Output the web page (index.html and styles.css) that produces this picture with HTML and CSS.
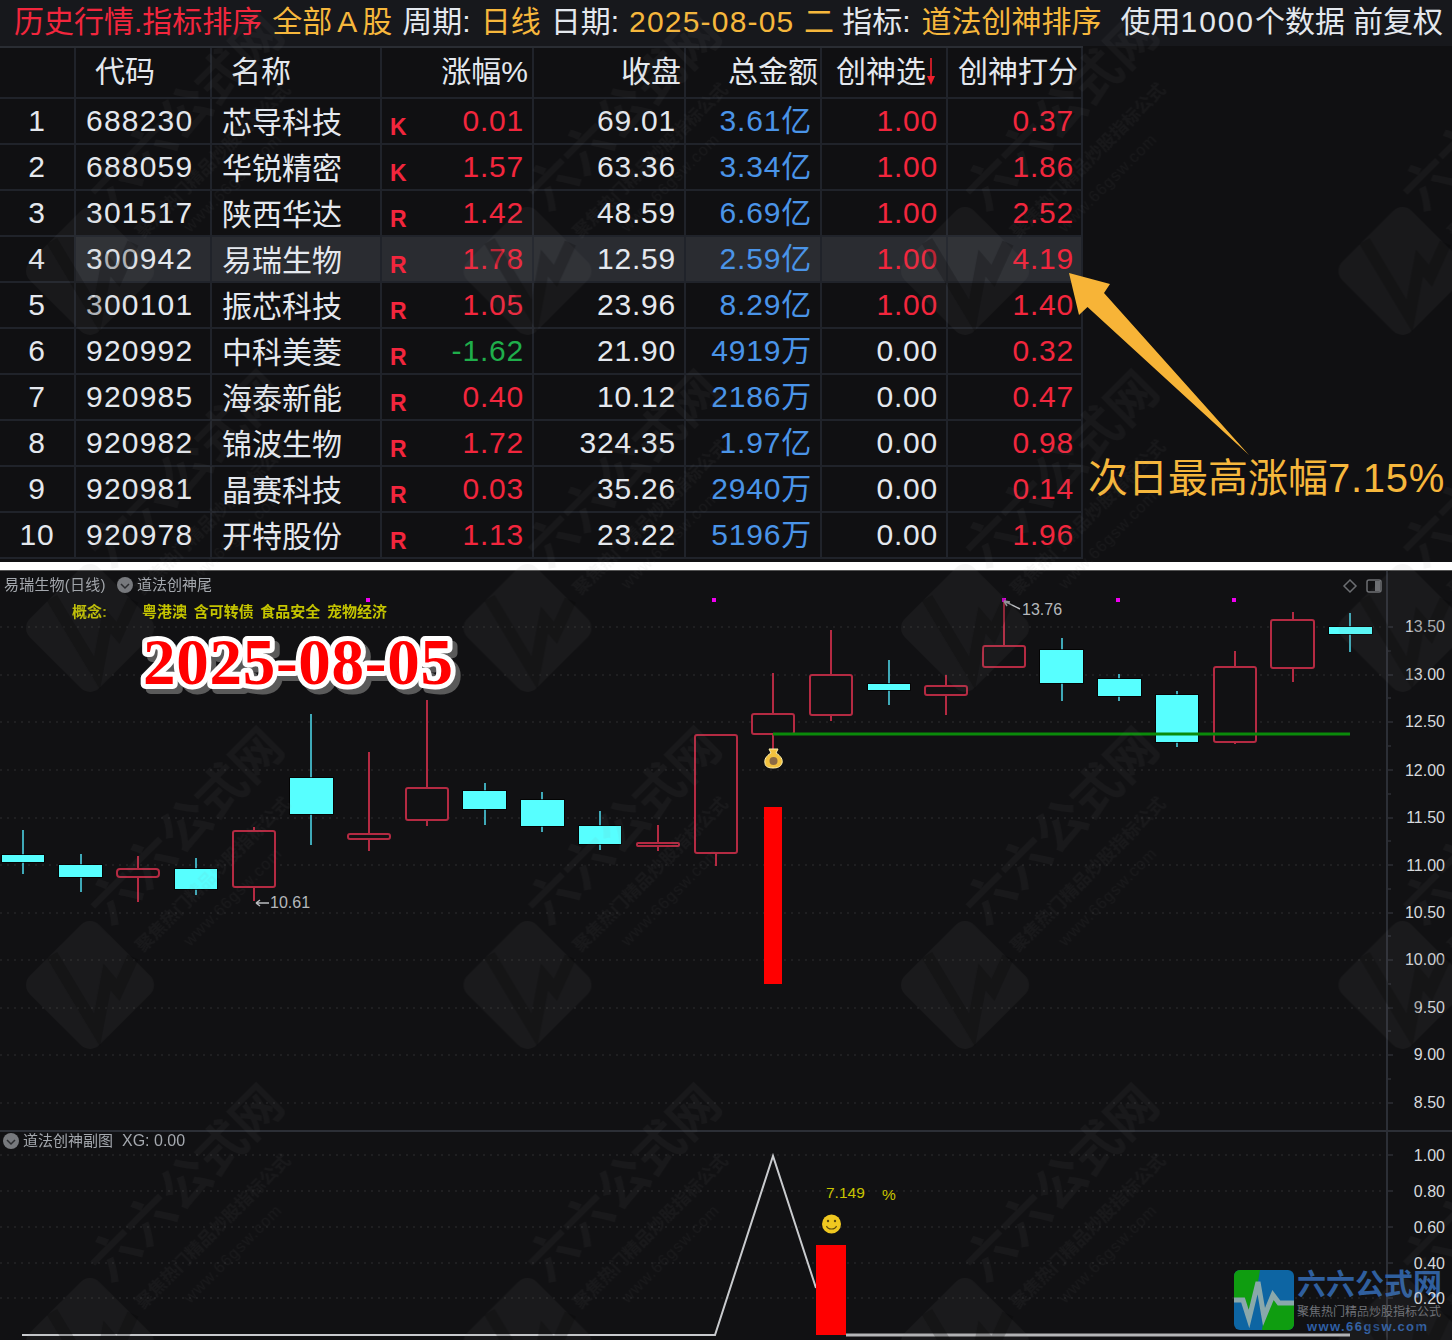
FILE: index.html
```html
<!DOCTYPE html>
<html lang="zh">
<head>
<meta charset="utf-8">
<title>历史行情.指标排序</title>
<link rel="stylesheet" href="styles.css">
</head>
<body>
<div class="page">
  <section class="top">
    <header class="title">
      <span class="red">历史行情.指标排序</span>
      <span class="gold">全部<span class="wide-a">A</span>股</span>
      <span class="white">周期:</span>
      <span class="gold">日线</span>
      <span class="white">日期:</span>
      <span class="gold num">2025-08-05 二</span>
      <span class="white n3">指标:</span>
      <span class="gold s1">道法创神排序</span>
      <span class="white s9">使用<span class="digits">1000</span>个数据</span>
      <span class="white n2">前复权</span>
    </header>
    <div class="body">
      <div class="table">
        <div class="row head">
          <div class="cell"></div>
          <div class="cell lh">代码</div>
          <div class="cell lh">名称</div>
          <div class="cell rh p6">涨幅%</div>
          <div class="cell rh p5">收盘</div>
          <div class="cell rh p4">总金额</div>
          <div class="cell lh sel">创神选<svg class="sort" width="10" height="30" viewBox="0 0 10 30"><path d="M5 1V20" stroke="#f0202c" stroke-width="1.6"/><path d="M1 19H9L5 28Z" fill="#f0202c"/></svg></div>
          <div class="cell lh score">创神打分</div>
        </div>
        <div class="row">
          <div class="cell rank">1</div><div class="cell code">688230</div><div class="cell name">芯导科技</div>
          <div class="cell pct"><span class="tag">K</span><span class="v red">0.01</span></div>
          <div class="cell v">69.01</div><div class="cell v blue">3.61亿</div><div class="cell v red pick">1.00</div><div class="cell v red last">0.37</div>
        </div>
        <div class="row">
          <div class="cell rank">2</div><div class="cell code">688059</div><div class="cell name">华锐精密</div>
          <div class="cell pct"><span class="tag">K</span><span class="v red">1.57</span></div>
          <div class="cell v">63.36</div><div class="cell v blue">3.34亿</div><div class="cell v red pick">1.00</div><div class="cell v red last">1.86</div>
        </div>
        <div class="row">
          <div class="cell rank">3</div><div class="cell code">301517</div><div class="cell name">陕西华达</div>
          <div class="cell pct"><span class="tag">R</span><span class="v red">1.42</span></div>
          <div class="cell v">48.59</div><div class="cell v blue">6.69亿</div><div class="cell v red pick">1.00</div><div class="cell v red last">2.52</div>
        </div>
        <div class="row active">
          <div class="cell rank">4</div><div class="cell code">300942</div><div class="cell name">易瑞生物</div>
          <div class="cell pct"><span class="tag">R</span><span class="v red">1.78</span></div>
          <div class="cell v">12.59</div><div class="cell v blue">2.59亿</div><div class="cell v red pick">1.00</div><div class="cell v red last">4.19</div>
        </div>
        <div class="row">
          <div class="cell rank">5</div><div class="cell code">300101</div><div class="cell name">振芯科技</div>
          <div class="cell pct"><span class="tag">R</span><span class="v red">1.05</span></div>
          <div class="cell v">23.96</div><div class="cell v blue">8.29亿</div><div class="cell v red pick">1.00</div><div class="cell v red last">1.40</div>
        </div>
        <div class="row">
          <div class="cell rank">6</div><div class="cell code">920992</div><div class="cell name">中科美菱</div>
          <div class="cell pct"><span class="tag">R</span><span class="v green">-1.62</span></div>
          <div class="cell v">21.90</div><div class="cell v blue">4919万</div><div class="cell v pick">0.00</div><div class="cell v red last">0.32</div>
        </div>
        <div class="row">
          <div class="cell rank">7</div><div class="cell code">920985</div><div class="cell name">海泰新能</div>
          <div class="cell pct"><span class="tag">R</span><span class="v red">0.40</span></div>
          <div class="cell v">10.12</div><div class="cell v blue">2186万</div><div class="cell v pick">0.00</div><div class="cell v red last">0.47</div>
        </div>
        <div class="row">
          <div class="cell rank">8</div><div class="cell code">920982</div><div class="cell name">锦波生物</div>
          <div class="cell pct"><span class="tag">R</span><span class="v red">1.72</span></div>
          <div class="cell v">324.35</div><div class="cell v blue">1.97亿</div><div class="cell v pick">0.00</div><div class="cell v red last">0.98</div>
        </div>
        <div class="row">
          <div class="cell rank">9</div><div class="cell code">920981</div><div class="cell name">晶赛科技</div>
          <div class="cell pct"><span class="tag">R</span><span class="v red">0.03</span></div>
          <div class="cell v">35.26</div><div class="cell v blue">2940万</div><div class="cell v pick">0.00</div><div class="cell v red last">0.14</div>
        </div>
        <div class="row">
          <div class="cell rank">10</div><div class="cell code">920978</div><div class="cell name">开特股份</div>
          <div class="cell pct"><span class="tag">R</span><span class="v red">1.13</span></div>
          <div class="cell v">23.22</div><div class="cell v blue">5196万</div><div class="cell v pick">0.00</div><div class="cell v red last">1.96</div>
        </div>
      </div>
      <aside class="callout">次日最高涨幅<span class="callout-num">7.15%</span></aside>
    </div>
    <svg class="pointer" width="200" height="200" viewBox="1060 265 200 200">
      <path class="pointer-fill" d="M1069 273L1110 284L1104 293L1249 455L1087.5 307L1079 315Z"/>
    </svg>
  </section>
  <div class="band"></div>

  <svg class="chart" width="1452" height="769" viewBox="0 571 1452 769">
    <g class="grid">
      <path d="M0 627H1387M0 675H1387M0 722H1387M0 770H1387M0 818H1387M0 865H1387M0 913H1387M0 960H1387M0 1008H1387M0 1055H1387M0 1103H1387"/>
      <path d="M0 1155H1387M0 1191H1387M0 1227H1387M0 1263H1387M0 1298H1387"/>
    </g>
    <path class="axis" d="M1387 571V1340M0 1131H1452"/>
    <path class="ticks" d="M1388 627H1393M1388 651H1391M1388 675H1393M1388 698H1391M1388 722H1393M1388 746H1391M1388 770H1393M1388 794H1391M1388 818H1393M1388 841H1391M1388 865H1393M1388 889H1391M1388 913H1393M1388 936H1391M1388 960H1393M1388 984H1391M1388 1008H1393M1388 1031H1391M1388 1055H1393M1388 1079H1391M1388 1103H1393M1388 1155H1393M1388 1191H1393M1388 1227H1393M1388 1263H1393M1388 1298H1393"/>

    <defs>
      <clipPath id="logoClip"><rect x="1234" y="1270" width="60" height="60" rx="6"/></clipPath>
    </defs>
    <g clip-path="url(#logoClip)">
      <rect class="logo-blue" x="1234" y="1270" width="60" height="60"/>
      <path class="logo-green" d="M1234 1270H1260L1258 1282L1249 1319L1243 1300H1234Z"/>
      <path class="logo-green" d="M1294 1303H1279L1273 1295L1264 1317L1262 1330H1294Z"/>
      <path class="logo-pulse" d="M1234 1300H1243L1249 1319L1258 1282L1264 1317L1273 1295L1279 1303H1294"/>
    </g>
    <text class="brand" x="1297" y="1295" textLength="145">六六公式网</text>
    <text class="brand-sub" x="1297" y="1316">聚焦热门精品炒股指标公式</text>
    <text class="brand-url" x="1307" y="1331" textLength="120">www.66gsw.com</text>

    <g class="axis-labels">
      <text x="1445" y="632">13.50</text><text x="1445" y="680">13.00</text><text x="1445" y="727">12.50</text>
      <text x="1445" y="776">12.00</text><text x="1445" y="823">11.50</text><text x="1445" y="871">11.00</text>
      <text x="1445" y="918">10.50</text><text x="1445" y="965">10.00</text><text x="1445" y="1013">9.50</text>
      <text x="1445" y="1060">9.00</text><text x="1445" y="1108">8.50</text>
      <text x="1445" y="1161">1.00</text><text x="1445" y="1197">0.80</text><text x="1445" y="1233">0.60</text>
      <text x="1445" y="1269">0.40</text><text x="1445" y="1304">0.20</text>
    </g>

    <g class="wick-fall">
      <path d="M23 830V874M81 854V892M196 858V895M311 714V845M485 783V825M542 792V832M600 811V850M889 660V705M1062 638V701M1119 674V701M1177 691V747M1350 613V652"/>
    </g>
    <g class="wick-rise">
      <path d="M138 856V902M254 827V901M369 752V851M427 700V826M658 825V851M716 735V866M773 673V750M831 630V721M946 675V715M1004 600V646M1235 651V744M1293 612V682"/>
    </g>

    <g class="fall">
      <rect x="2" y="855" width="42" height="7"/>
      <rect x="59" y="865" width="43" height="12"/>
      <rect x="175" y="869" width="42" height="20"/>
      <rect x="290" y="778" width="43" height="36"/>
      <rect x="463" y="791" width="43" height="18"/>
      <rect x="521" y="800" width="43" height="26"/>
      <rect x="579" y="826" width="42" height="18"/>
      <rect x="868" y="684" width="42" height="6"/>
      <rect x="1040" y="650" width="43" height="33"/>
      <rect x="1098" y="679" width="43" height="17"/>
      <rect x="1156" y="695" width="42" height="47"/>
      <rect x="1329" y="627" width="43" height="7"/>
    </g>
    <g class="rise">
      <rect x="117" y="869" width="42" height="8" rx="3"/>
      <rect x="233" y="831" width="42" height="56" rx="2"/>
      <rect x="348" y="834" width="42" height="5" rx="2"/>
      <rect x="406" y="788" width="42" height="32" rx="2"/>
      <rect x="637" y="843" width="42" height="3" rx="1"/>
      <rect x="695" y="735" width="42" height="118" rx="2"/>
      <rect x="752" y="714" width="42" height="20" rx="2"/>
      <rect x="810" y="675" width="42" height="40" rx="2"/>
      <rect x="925" y="686" width="42" height="9" rx="2"/>
      <rect x="983" y="646" width="42" height="21" rx="2"/>
      <rect x="1214" y="667" width="42" height="75" rx="2"/>
      <rect x="1271" y="620" width="43" height="48" rx="2"/>
    </g>

    <path class="support" d="M773 734H1350"/>
    <rect class="solid-red" x="764" y="807" width="18" height="177"/>

    <g class="dots">
      <rect x="366" y="598" width="4" height="4"/><rect x="712" y="598" width="4" height="4"/>
      <rect x="1002" y="598" width="4" height="4"/><rect x="1116" y="598" width="4" height="4"/>
      <rect x="1232" y="598" width="4" height="4"/>
    </g>

    <g class="bag">
      <path class="bag-body" d="M769 749H778L776 753C781 756 783 760 782 763C781 767 777 768 773 768C769 768 765 767 765 763C764 760 766 756 771 753Z"/>
      <circle class="bag-mark" cx="773.500" cy="761" r="4"/>
    </g>

    <g class="mark">
      <path d="M1004 601L1020 609M1004 601L1010 602M1004 601L1007 606"/>
      <path d="M256 903H269M256 903L260 900M256 903L260 906"/>
    </g>
    <text class="price-note" x="1022" y="615">13.76</text>
    <text class="price-note" x="270" y="908">10.61</text>

    <text class="info wide" x="4" y="590">易瑞生物(日线)</text>
    <circle class="round" cx="125" cy="585" r="8"/><path class="chev" d="M121 584L125 588L129 584"/>
    <text class="info" x="137" y="590">道法创神尾</text>
    <text class="concept" x="72" y="617">概念:</text>
    <text class="concept spaced" x="142" y="617">粤港澳 含可转债 食品安全 宠物经济</text>
    <text class="stamp" x="143" y="684" textLength="310" lengthAdjust="spacing">2025-08-05</text>

    <path class="tool" d="M1350 580L1356 586L1350 592L1344 586Z"/>
    <rect class="tool" x="1367" y="580" width="14" height="12" rx="2"/><rect class="tool-fill" x="1375" y="581" width="5" height="10"/>

    <circle class="round" cx="11" cy="1141" r="8"/><path class="chev" d="M7 1140L11 1144L15 1140"/>
    <text class="info" x="23" y="1146">道法创神副图</text>
    <text class="info latin" x="122" y="1146">XG: 0.00</text>

    <path class="sub-line" d="M22 1335H715L773 1156L816 1288"/>
    <path class="sub-base" d="M846 1335H1350"/>
    <rect class="solid-red" x="816" y="1245" width="30" height="90"/>
    <text class="yield" x="826" y="1198">7.149</text>
    <text class="yield" x="882" y="1200">%</text>
    <circle class="smile" cx="831.500" cy="1224" r="9.500"/>
    <circle class="eye" cx="828" cy="1221" r="1.200"/><circle class="eye" cx="835" cy="1221" r="1.200"/>
    <path class="grin" d="M826.500 1226C828 1230 835 1230 836.500 1226"/>
  </svg>

  <svg class="watermark" width="1452" height="1340" aria-hidden="true">
    <defs>
      <pattern id="wm" patternUnits="userSpaceOnUse" width="437.500" height="357">
        <rect class="wm-tile" x="41" y="222" width="98" height="98" rx="13" transform="rotate(45 90 271)"/>
        <path class="wm-pulse" d="M52 241L97 316L107 263L118 276L133 243"/>
        <text class="wm-big" transform="translate(110 213) rotate(-45)">六六公式网</text>
        <text class="wm-mid" transform="translate(143 239) rotate(-45)">聚焦热门精品炒股指标公式</text>
        <text class="wm-small" transform="translate(190 233) rotate(-45)">www.66gsw.com</text>
      </pattern>
    </defs>
    <rect width="1452" height="1340" fill="url(#wm)"/>
  </svg>
</div>
</body>
</html>
```
FILE: styles.css
```css
* { box-sizing: border-box; }
html, body { margin: 0; padding: 0; background: #111113; }
body { overflow: hidden; font-family: "Liberation Sans", "Noto Sans CJK SC", sans-serif; }
.page { position: relative; width: 1452px; height: 1340px; overflow: hidden; }

.top { position: relative; height: 562px; background: #101012; }
.title {
  display: flex; align-items: center; gap: 10px;
  height: 46px; padding: 0 0 2px 14px;
  background: #17181c;
  font-size: 30px; line-height: 40px; white-space: nowrap;
}
.red { color: #f2263d; }
.gold { color: #f6b73c; }
.white { color: #e4e8ee; }
.blue { color: #4a94e8; }
.green { color: #1fae4b; }
.num { letter-spacing: 1.2px; }
.digits { letter-spacing: 1.9px; }
.wide-a { margin: 0 5px; }
.n2 { margin-left: -2px; }
.n3 { margin-left: -3px; }
.s1 { margin-left: 1px; }
.s9 { margin-left: 9px; }

.body { display: flex; align-items: flex-start; }
.table { width: 1083px; font-size: 30px; line-height: 40px; color: #e4e8ee; }
.row {
  display: grid;
  grid-template-columns: 76px 136px 170px 152px 152px 136px 126px 135px;
  height: 46px;
  border-bottom: 2px solid #20232a;
}
.row.head { height: 53px; border-top: 2px solid #2a2d33; }
.row.head .cell { padding-bottom: 1px; }
.cell {
  display: flex; align-items: center;
  border-right: 2px solid #20232a;
  white-space: nowrap;
}
.lh { padding-left: 19px; }
.rh { justify-content: flex-end; }
.p6 { padding-right: 4px; }
.p5 { padding-right: 3px; }
.p4 { padding-right: 2px; }
.row.head .sel { padding-left: 14px; }
.row.head .score { padding-left: 10px; }
.sort { flex: none; }

.rank { justify-content: center; letter-spacing: 0.8px; }
.code { padding-left: 10px; letter-spacing: 1.2px; }
.name { padding: 3px 0 0 10px; }
.pct { justify-content: space-between; padding: 0 8px 0 8px; }
.tag { margin-top: 11px; font-size: 23px; line-height: 26px; font-weight: 700; color: #f2263d; }
.v { justify-content: flex-end; padding-right: 8px; letter-spacing: 0.8px; }
.v.last { padding-right: 7px; }
.pct .v { padding-right: 0; }
.row.active .cell:not(:first-child) { background: #2a2c31; }

.callout {
  margin: 412px 0 0 5px;
  font-size: 40px; line-height: 40px; color: #f6b73c; white-space: nowrap;
}
.callout-num { letter-spacing: 0.7px; }
.pointer { position: absolute; left: 1060px; top: 265px; }
.pointer-fill { fill: #f7b437; }

.band { height: 9px; background: #fff; border-bottom: 1px solid #555; }
.chart { display: block; background: #111113; }
.chart text { font-family: "Liberation Sans", "Noto Sans CJK SC", sans-serif; }

.grid path { fill: none; stroke: #2e2e31; stroke-width: 1; stroke-dasharray: 2 5; }
.axis { fill: none; stroke: #2c2f36; stroke-width: 2; }
.ticks { fill: none; stroke: #3a3d44; stroke-width: 1; }
.axis-labels text { font-size: 16px; fill: #d6d9dd; text-anchor: end; }

.wick-fall path { fill: none; stroke: #3fa9b8; stroke-width: 2; }
.wick-rise path { fill: none; stroke: #b42a42; stroke-width: 2; }
.fall rect { fill: #57ffff; stroke: #000; stroke-width: 1.5; paint-order: stroke; }
.rise rect { fill: #111113; stroke: #b42a42; stroke-width: 2; }
.support { fill: none; stroke: #0a8a0a; stroke-width: 3; }
.solid-red { fill: #ff0000; }
.dots rect { fill: #f000f0; }

.bag-body { fill: #f3c23f; stroke: #fff1b0; stroke-width: 1; }
.bag-mark { fill: #8c6a44; }
.mark path { fill: none; stroke: #b9bcc0; stroke-width: 1.5; }
.price-note { font-size: 16px; fill: #b5b8bc; }

.info { font-size: 15px; fill: #a4a8ae; filter: blur(0.35px); }
.wide { letter-spacing: 0.2px; }
.latin { font-size: 16px; }
.concept { font-size: 15px; font-weight: 700; fill: #c4c400; filter: blur(0.3px); }
.spaced { word-spacing: 2.5px; }
.round { fill: #77797d; }
.chev { fill: none; stroke: #2b2c2f; stroke-width: 1.5; }
.stamp {
  font-family: "Liberation Serif", serif !important;
  font-size: 65px; font-weight: 700; fill: #ff0000;
  stroke: #fff; stroke-width: 10px; stroke-linejoin: round; paint-order: stroke fill;
  filter: drop-shadow(5px 5px 0 #5a5a5a);
}
.tool { fill: none; stroke: #6c6e72; stroke-width: 1.5; }
.tool-fill { fill: #6c6e72; }

.sub-line { fill: none; stroke: #c9cbce; stroke-width: 2; }
.sub-base { fill: none; stroke: #b5b6b8; stroke-width: 3; }
.yield { font-size: 15.5px; fill: #c8c400; }
.smile { fill: #f0c820; }
.eye { fill: #5c4a10; }
.grin { fill: none; stroke: #5c4a10; stroke-width: 1.2; }

.logo-blue { fill: #0d65a3; }
.logo-green { fill: #0f9d10; }
.logo-pulse { fill: none; stroke: #8aa8ab; stroke-width: 5; }
.brand { font-size: 29px; font-weight: 700; fill: #2f5f9f; }
.brand-sub { font-size: 12px; fill: #6f7278; }
.brand-url { font-size: 13px; font-weight: 700; fill: #2f5fa5; }

.watermark { position: absolute; left: 0; top: 0; pointer-events: none; }
.wm-tile { fill: #808080; fill-opacity: 0.08; }
.wm-pulse { fill: none; stroke: #000; stroke-opacity: 0.2; stroke-width: 12; }
.wm-big, .wm-mid, .wm-small { font-family: "Liberation Sans", "Noto Sans CJK SC", sans-serif; fill: #808080; fill-opacity: 0.07; }
.wm-big { font-size: 50px; font-weight: 700; }
.wm-mid { font-size: 17.5px; font-weight: 700; }
.wm-small { font-size: 16px; letter-spacing: 1px; }
```
